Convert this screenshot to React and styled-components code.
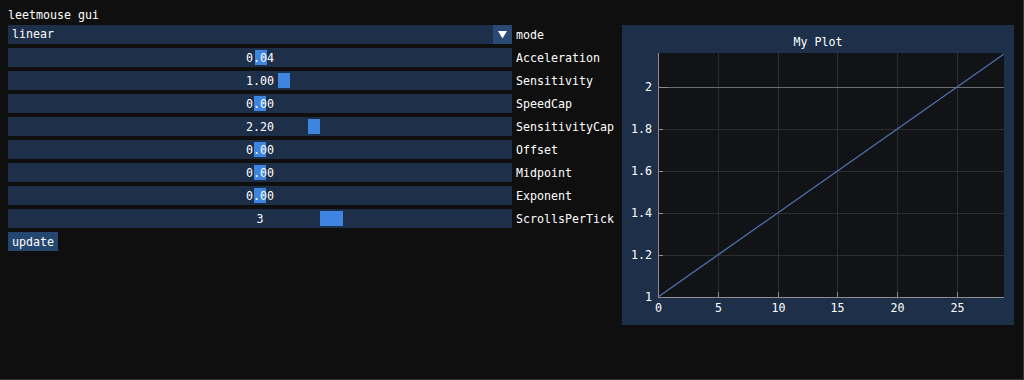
import React from "react";
import styled, { createGlobalStyle } from "styled-components";

const Global = createGlobalStyle`
  html, body { margin: 0; padding: 0; background: #0f0f0f; }
  body { font-family: "DejaVu Sans Mono", "Liberation Mono", monospace; font-size: 11.63px; color: #fff; }
`;

const FONT = `"DejaVu Sans Mono", "Liberation Mono", monospace`;

const Window = styled.div`
  box-sizing: border-box;
  width: 1024px;
  height: 380px;
  background: #0f0f0f;
  border-right: 1px solid #35353c;
  border-bottom: 1px solid #35353c;
  padding: 8px;
  display: flex;
  flex-direction: column;
  gap: 4px;
  line-height: 13px;
`;

const Title = styled.div`
  box-sizing: border-box;
  height: 13px;
  padding-top: 1px;
`;

const Body = styled.div`
  display: flex;
  gap: 8px;
  align-items: flex-start;
`;

const Controls = styled.div`
  display: flex;
  flex-direction: column;
  gap: 4px;
  width: 606px;
`;

const Row = styled.div`
  display: flex;
  gap: 4px;
  align-items: center;
  height: 19px;
`;

const Frame = styled.div`
  position: relative;
  box-sizing: border-box;
  width: 504px;
  height: 19px;
  background: #1d2f49;
  display: flex;
  align-items: center;
`;

const ComboText = styled.span`
  padding-left: 4px;
  flex: 1;
`;

const ArrowBox = styled.div`
  width: 19px;
  height: 19px;
  background: #2a4a73;
  display: flex;
  align-items: center;
  justify-content: center;
`;

const Grab = styled.div`
  position: absolute;
  top: 2px;
  height: 15px;
  width: ${(p) => p.$w}px;
  background: #3d85e0;
`;

const Value = styled.span`
  position: relative;
  z-index: 1;
  width: 100%;
  text-align: center;
  padding-top: 1px;
`;

const Label = styled.span`
  white-space: nowrap;
  padding-top: 1px;
`;

const Button = styled.button`
  align-self: flex-start;
  box-sizing: border-box;
  height: 19px;
  padding: 1px 4px 0;
  border: none;
  background: #24466f;
  color: #fff;
  font-family: ${FONT};
  font-size: 11.63px;
  line-height: 13px;
  cursor: pointer;
`;

const PlotFrame = styled.div`
  box-sizing: border-box;
  width: 392px;
  height: 300px;
  background: #1d2f49;
  padding: 10px;
  display: flex;
  flex-direction: column;
`;

const PlotTitle = styled.div`
  box-sizing: border-box;
  height: 13px;
  text-align: center;
  padding-top: 1px;
`;

const sliders = [
  { label: "Acceleration", text: "0.04", left: 247, w: 12 },
  { label: "Sensitivity", text: "1.00", left: 270, w: 12 },
  { label: "SpeedCap", text: "0.00", left: 246, w: 12 },
  { label: "SensitivityCap", text: "2.20", left: 300, w: 12 },
  { label: "Offset", text: "0.00", left: 246, w: 12 },
  { label: "Midpoint", text: "0.00", left: 246, w: 12 },
  { label: "Exponent", text: "0.00", left: 246, w: 12 },
  { label: "ScrollsPerTick", text: "3", left: 312, w: 23 },
];

function Plot() {
  const x0 = 26, x1 = 372, y0 = 5, y1 = 249;
  const X = (v) => x0 + v * 11.96;
  const Y = (v) => y1 - (v - 1) * 210;
  const xt = [0, 5, 10, 15, 20, 25];
  const yt = [1, 1.2, 1.4, 1.6, 1.8, 2];
  const xMax = (x1 - x0) / 11.96;
  return (
    <svg width="372" height="267" style={{ display: "block", overflow: "visible" }}>
      <defs>
        <clipPath id="pa">
          <rect x={x0} y={y0} width={x1 - x0} height={y1 - y0} />
        </clipPath>
      </defs>
      <rect x={x0} y={y0} width={x1 - x0} height={y1 - y0} fill="#121316" />
      {xt.slice(1).map((v) => (
        <line key={"gx" + v} x1={Math.round(X(v)) + 0.5} x2={Math.round(X(v)) + 0.5} y1={y0} y2={y1} stroke="#2c2d30" strokeWidth="1" />
      ))}
      {yt.slice(1).map((v) => (
        <line key={"gy" + v} x1={x0} x2={x1} y1={Math.round(Y(v)) + 0.5} y2={Math.round(Y(v)) + 0.5} stroke={v === 2 ? "#6c6c70" : "#2c2d30"} strokeWidth="1" />
      ))}
      <line
        x1={X(0)}
        y1={Y(1)}
        x2={X(xMax)}
        y2={Y(1 + 0.04 * xMax)}
        stroke="#4c72b0"
        strokeWidth="1.3"
        clipPath="url(#pa)"
      />
      <line x1={x0 + 0.5} x2={x0 + 0.5} y1={y0} y2={y1 + 0.5} stroke="#8e8e92" />
      <line x1={x0} x2={x1} y1={y1 + 0.5} y2={y1 + 0.5} stroke="#8e8e92" />
      {xt.map((v) => (
        <line key={"tx" + v} x1={Math.round(X(v)) + 0.5} x2={Math.round(X(v)) + 0.5} y1={y1 - 5} y2={y1} stroke="#8e8e92" />
      ))}
      {yt.map((v) => (
        <line key={"ty" + v} x1={x0} x2={x0 + (v === 2 ? 10 : 5)} y1={Math.round(Y(v)) + 0.5} y2={Math.round(Y(v)) + 0.5} stroke="#8e8e92" />
      ))}
      {yt.map((v) => (
        <text key={"ly" + v} x="20" y={Math.round(Y(v)) + 4} textAnchor="end" fill="#fff" fontFamily={FONT} fontSize="11.63">
          {v === 1 || v === 2 ? String(v) : v.toFixed(1)}
        </text>
      ))}
      {xt.map((v) => (
        <text key={"lx" + v} x={Math.round(X(v)) + 0.5} y="264" textAnchor="middle" fill="#fff" fontFamily={FONT} fontSize="11.63">
          {v}
        </text>
      ))}
    </svg>
  );
}

export default function App() {
  return (
    <>
      <Global />
      <Window>
        <Title>leetmouse gui</Title>
        <Body>
          <Controls>
            <Row>
              <Frame>
                <ComboText>linear</ComboText>
                <ArrowBox>
                  <svg width="11" height="9" viewBox="0 0 11 9">
                    <polygon points="1,1 10,1 5.5,8.5" fill="#fff" />
                  </svg>
                </ArrowBox>
              </Frame>
              <Label>mode</Label>
            </Row>
            {sliders.map((s) => (
              <Row key={s.label}>
                <Frame>
                  <Grab $w={s.w} style={{ left: s.left }} />
                  <Value>{s.text}</Value>
                </Frame>
                <Label>{s.label}</Label>
              </Row>
            ))}
            <Button>update</Button>
          </Controls>
          <PlotFrame>
            <PlotTitle>My Plot</PlotTitle>
            <Plot />
          </PlotFrame>
        </Body>
      </Window>
    </>
  );
}
